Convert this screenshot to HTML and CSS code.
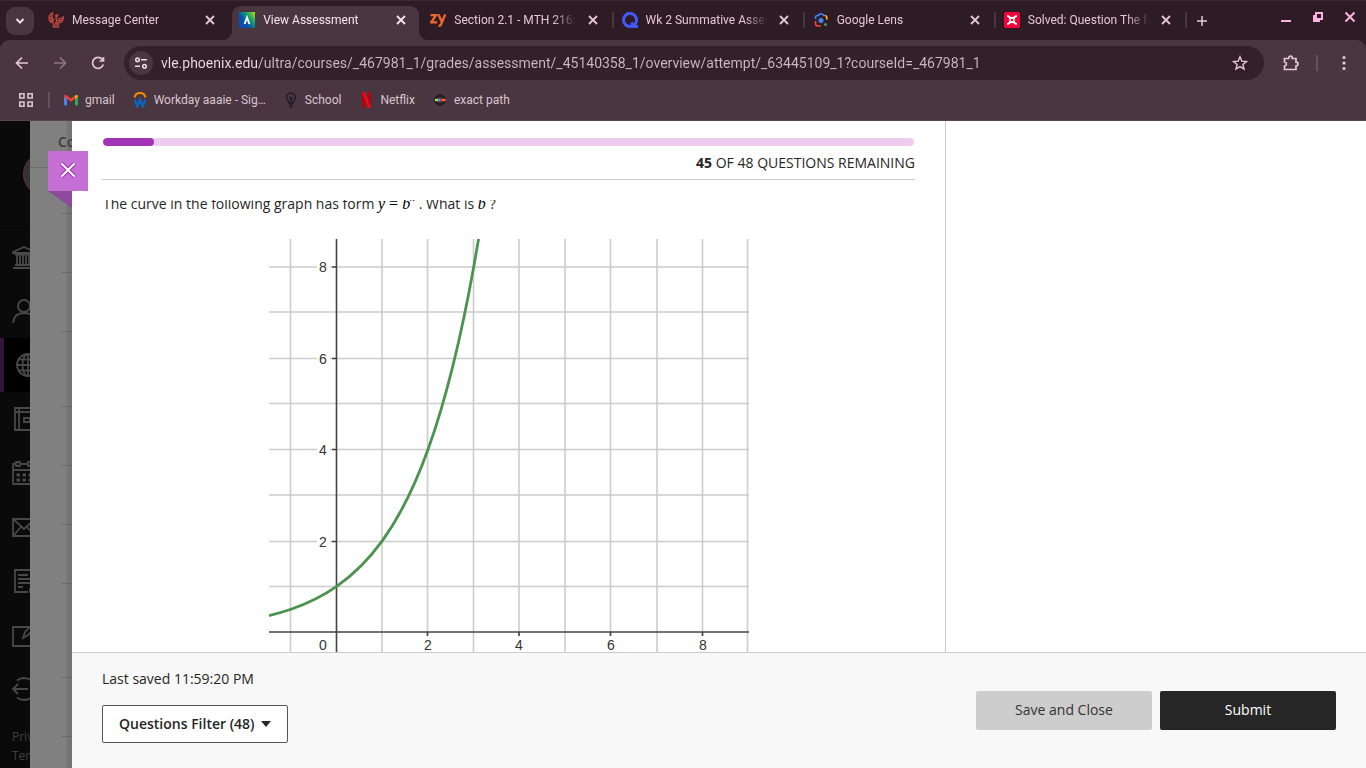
FILE: index.html
```html
<!DOCTYPE html>
<html lang="en">
<head>
<meta charset="utf-8">
<meta name="viewport" content="width=device-width, initial-scale=1">
<title>View Assessment</title>
<link rel="stylesheet" href="styles.css">
</head>
<body>
<header class="browser">
  <div class="tabstrip">
    <button class="tab-search" aria-label="Search tabs"><svg width="12" height="12" viewBox="0 0 12 12"><path d="M2.500 4l3.500 3.600L9.500 4" fill="none" stroke="currentColor" stroke-width="2"/></svg></button>
    <div class="tabs">
      <div class="tab">
        <svg class="fav" width="16" height="16" viewBox="0 0 16 16" fill="none" stroke="#b8443f" stroke-width="1.500"><path d="M5 .5C2 2 .5 5 1.500 8L5 9.500M5 1c-2 3-1.500 5 1 7M2 5l4 4M1 8c1 2 3 3 5 3M7 4l2-1-1 3 1 3-2 3M15.500 4c0 5-2 7-6 7M15 6l-5 1M15 8l-6 1M8 10v5M6 12l-1 3M9 11l2 3M10 3l-2 3M5 15h6"/></svg>
        <span class="tab-title">Message Center</span>
        <button class="tab-close" aria-label="Close tab"><svg width="10" height="10" viewBox="0 0 10 10"><path d="M1 1l8 8M9 1L1 9"/></svg></button>
      </div>
      <div class="tab tab-active">
        <svg class="fav" width="16" height="16" viewBox="0 0 16 16"><defs><linearGradient id="ally" x1="0" y1=".8" x2="1" y2="0"><stop offset=".3" stop-color="#0a4fae"/><stop offset=".6" stop-color="#0b9a78"/><stop offset="1" stop-color="#b8e000"/></linearGradient></defs><path fill="url(#ally)" d="M0 0h16v16H0z"/><path d="M5.600 12L8 5.500 10.400 12" fill="none" stroke="#fff" stroke-width="1.900"/></svg>
        <span class="tab-title">View Assessment</span>
        <button class="tab-close" aria-label="Close tab"><svg width="10" height="10" viewBox="0 0 10 10"><path d="M1 1l8 8M9 1L1 9"/></svg></button>
      </div>
      <div class="tab tab-sep">
        <svg class="fav" width="16" height="16" viewBox="0 0 16 16" fill="none" stroke="#f0682a" stroke-width="2.300"><path d="M.5 3.200h5.500L1.200 10.300h6M8.500 2.500l3.300 7.500M15.200 2.500l-4 9.500c-.5 1.400-1.400 2-2.700 1.700"/></svg>
        <span class="tab-title">Section 2.1 - MTH 216:</span>
        <button class="tab-close" aria-label="Close tab"><svg width="10" height="10" viewBox="0 0 10 10"><path d="M1 1l8 8M9 1L1 9"/></svg></button>
      </div>
      <div class="tab tab-sep">
        <svg class="fav" width="16" height="16" viewBox="0 0 16 16" fill="none" stroke="#4257ff" stroke-width="3"><circle cx="8" cy="8" r="6.500"/><path d="M9.500 10.500l2 4H16"/></svg>
        <span class="tab-title">Wk 2 Summative Asses</span>
        <button class="tab-close" aria-label="Close tab"><svg width="10" height="10" viewBox="0 0 10 10"><path d="M1 1l8 8M9 1L1 9"/></svg></button>
      </div>
      <div class="tab tab-sep">
        <svg class="fav" width="16" height="16" viewBox="0 0 16 16" fill="none" stroke-width="1.700"><path d="M4 3.500h1.500l1-1.500h3l1 1.500H12" stroke="#4285f4"/><path d="M2.500 7V5.500q0-2 2-2" stroke="#4285f4"/><path d="M12 3.500q1.800.2 1.800 2v2" stroke="#fbbc04"/><path d="M2.500 9v2.500q0 2.500 2.500 2.500h3" stroke="#ea4335"/><circle cx="8" cy="8.500" r="2.500" fill="#4285f4"/><circle cx="12.500" cy="12.500" r="1.500" fill="#34a853"/></svg>
        <span class="tab-title">Google Lens</span>
        <button class="tab-close" aria-label="Close tab"><svg width="10" height="10" viewBox="0 0 10 10"><path d="M1 1l8 8M9 1L1 9"/></svg></button>
      </div>
      <div class="tab tab-sep">
        <svg class="fav" width="16" height="16" viewBox="0 0 16 16"><rect width="16" height="16" rx="2.500" fill="#fb0038"/><path d="M3 4.200h1.500Q5.500 6 8 6t3.500-1.800H13M3 11.800h1.500Q5.500 10 8 10t3.500 1.800H13" fill="none" stroke="#fff" stroke-width="1.800"/><path d="M5.500 5.500q1.500 2.500 0 5M10.500 5.500q-1.500 2.500 0 5" fill="none" stroke="#fff" stroke-width="1.500"/></svg>
        <span class="tab-title">Solved: Question The fo</span>
        <button class="tab-close" aria-label="Close tab"><svg width="10" height="10" viewBox="0 0 10 10"><path d="M1 1l8 8M9 1L1 9"/></svg></button>
      </div>
    </div>
    <button class="new-tab" aria-label="New tab"><svg width="12" height="12" viewBox="0 0 12 12"><path d="M6 1v10M1 6h10" stroke="currentColor" stroke-width="1.500"/></svg></button>
    <div class="window-controls">
      <button aria-label="Minimize"><svg width="12" height="12" viewBox="0 0 12 12"><path d="M1 10h10" stroke="currentColor" stroke-width="2"/></svg></button>
      <button aria-label="Restore"><svg width="12" height="12" viewBox="0 0 12 12" fill="none" stroke="currentColor" stroke-width="2"><path d="M4 2h6v6H4zM2 4v6h6"/></svg></button>
      <button aria-label="Close window"><svg width="12" height="12" viewBox="0 0 12 12"><path d="M1.500 1.500l9 9M10.500 1.500l-9 9" stroke="currentColor" stroke-width="2"/></svg></button>
    </div>
  </div>
  <div class="toolbar">
    <button class="nav-btn" aria-label="Back"><svg width="14" height="14" viewBox="0 0 14 14"><path d="M13 7H2M7 1.500L1.500 7 7 12.500"/></svg></button>
    <button class="nav-btn nav-off" aria-label="Forward"><svg width="14" height="14" viewBox="0 0 14 14"><path d="M1 7h11M7 1.500L12.500 7 7 12.500"/></svg></button>
    <button class="nav-btn" aria-label="Reload"><svg width="14" height="14" viewBox="0 0 14 14"><path d="M12.300 8.500A5.500 5.500 0 1 1 11.300 3.400l1 1.200M12.500 1v4H8.500"/></svg></button>
    <div class="address">
      <button class="site-info" aria-label="Site information"><svg width="14" height="14" viewBox="0 0 14 14" fill="none" stroke="currentColor" stroke-width="1.500"><circle cx="3.500" cy="3.700" r="1.800"/><path d="M7 3.700h6M1 10.300h5"/><circle cx="10.500" cy="10.300" r="1.800"/></svg></button>
      <input class="url" type="text" aria-label="Address" value="vle.phoenix.edu/ultra/courses/_467981_1/grades/assessment/_45140358_1/overview/attempt/_63445109_1?courseId=_467981_1">
      <button class="star" aria-label="Bookmark this tab"><svg width="16" height="16" viewBox="0 0 16 16"><path d="M8 1.800l1.800 4.300 4.700.4-3.600 3 1.100 4.600L8 11.600l-4 2.500 1.100-4.600-3.600-3 4.700-.4z" fill="none" stroke="currentColor" stroke-width="1.400"/></svg></button>
    </div>
    <button class="nav-btn" aria-label="Extensions"><svg width="18" height="18" viewBox="0 0 18 18"><path d="M2.500 4.500h4.200q0-2.500 1.800-2.500t1.800 2.500h3.700v3.700q2 .2 2 1.800t-2 1.800v3.700H2.500v-3.500q2-.4 2-2t-2-2z"/></svg></button>
    <span class="divider"></span>
    <button class="nav-btn" aria-label="Menu"><svg class="dots" width="16" height="16" viewBox="0 0 16 16"><circle cx="8" cy="2.500" r="1.600"/><circle cx="8" cy="8" r="1.600"/><circle cx="8" cy="13.500" r="1.600"/></svg></button>
  </div>
  <nav class="bookmarks" aria-label="Bookmarks">
    <button class="apps" aria-label="Apps"><svg width="14" height="14" viewBox="0 0 14 14" fill="none" stroke="currentColor" stroke-width="1.600"><path d="M.8.8h4.200v4.200H.8zM9 .8h4.200v4.200H9zM.8 9h4.200v4.200H.8zM9 9h4.200v4.200H9z"/></svg></button>
    <span class="divider"></span>
    <a class="bookmark" href="#"><svg width="16" height="16" viewBox="0 0 16 16"><path d="M1 4.500L4 6.700V13.500H2q-1 0-1-1z" fill="#4285f4"/><path d="M15 4.500l-3 2.200v6.800h2q1 0 1-1z" fill="#34a853"/><path d="M1 4.500Q1 2.200 3.200 3L8 6.600 12.800 3 12 6.700l-4 3-4-3z" fill="#ea4335"/><path d="M12 3.600Q15 1.800 15 4.500L12 6.900z" fill="#fbbc04"/></svg>gmail</a>
    <a class="bookmark" href="#"><svg width="16" height="16" viewBox="0 0 16 16" fill="none"><path d="M2.500 5.500a5.600 5.600 0 0 1 11 0" stroke="#f38b00" stroke-width="2"/><path d="M2.500 7.500l2.700 7L8 8l2.800 6.500 2.700-7" stroke="#0a66c2" stroke-width="2.300"/></svg>Workday aaaie - Sig…</a>
    <a class="bookmark" href="#"><svg width="16" height="16" viewBox="0 0 16 16" fill="none" stroke="#241c20" stroke-width="1.500"><path d="M6 11.500Q6 9.500 4.500 8 3 6 4 3.500 5.300 1 8 1t4 2.500q1 2.500-.5 4.500-1.500 1.500-1.500 3.500zM6 13.500h4M7 15.300h2M8 11V7M6.500 5L8 7.500 9.500 5"/></svg>School</a>
    <a class="bookmark" href="#"><svg width="16" height="16" viewBox="0 0 16 16"><path d="M4 0h3v16H4zM10 0h3v16h-3z" fill="#b1060f"/><path d="M4 0h3l6 16h-3z" fill="#f20a18"/></svg>Netflix</a>
    <a class="bookmark" href="#"><svg width="16" height="16" viewBox="0 0 16 16"><circle cx="8" cy="8" r="4.500" fill="none" stroke="#211b1e" stroke-width="2.500"/><path d="M3 6.800h3v2.400H3z" fill="#c5e63a"/><path d="M5.500 6.800H8v2.400H5.500z" fill="#17bfc4"/><path d="M8 6.800h3v2.400H8z" fill="#f21b7f"/><path d="M10.500 6.800h3v2.400h-3z" fill="#ff7a20"/></svg>exact path</a>
  </nav>
</header>

<div class="app">
  <aside class="rail">
    <div class="rail-user"><span class="avatar"></span></div>
    <nav class="rail-nav" aria-label="Main">
      <a href="#" aria-label="Institution"><svg width="24" height="24" viewBox="0 0 24 24"><path d="M1 7l11-5 11 5v1H1zM3 9.500h18M5 10v9M8 10v9M11 10v9M14 10v9M17 10v9M3 20h18M1 23h22"/></svg></a>
      <a href="#" aria-label="Profile"><svg width="24" height="24" viewBox="0 0 24 24"><circle cx="12" cy="7" r="6"/><path d="M1 24q1-10 11-10t11 10"/></svg></a>
      <a class="rail-current" href="#" aria-label="Activity"><svg width="24" height="24" viewBox="0 0 24 24"><circle cx="12" cy="12" r="11"/><ellipse cx="12" cy="12" rx="5.500" ry="11"/><path d="M12 1v22M1 12h22M3 6.500h18M3 17.500h18"/></svg></a>
      <a href="#" aria-label="Courses"><svg class="inset" width="24" height="24" viewBox="0 0 24 24"><path d="M1 1h22v22H1zM5 1v22M1 5h22M10 11h6v4h-6z"/></svg></a>
      <a href="#" aria-label="Calendar"><svg width="24" height="24" viewBox="0 0 24 24"><path d="M4 3H1v20h22V3h-3M9 3h6M1 9h22M4 1h4v4H4zM16 1h4v4h-4z"/><path d="M4.500 14h15M4.500 19h15" stroke-width="3" stroke-dasharray="3.500 2.500"/></svg></a>
      <a href="#" aria-label="Messages"><svg width="24" height="24" viewBox="0 0 24 24"><path d="M1 4h22v17H1zM1 4l11 10L23 4M1 21l8-9M23 21l-8-9"/></svg></a>
      <a href="#" aria-label="Grades"><svg class="inset" width="24" height="24" viewBox="0 0 24 24"><path d="M14 23H1V1h20v16M4 6h10M4 10h12M4 14h12M4 18h5M16 24v-4l5-3"/></svg></a>
      <a href="#" aria-label="Tools"><svg width="24" height="24" viewBox="0 0 24 24"><path d="M18 4H1v19h22V11M11 15l2-6 8-8 3 3-8 8z"/></svg></a>
      <a href="#" aria-label="Sign out"><svg width="24" height="24" viewBox="0 0 24 24"><path d="M1 12h15M6 7l-5 5 5 5M5 3.500Q8 1 12 1q11 1 11 11T12 23q-4 0-7-2.500"/></svg></a>
    </nav>
    <div class="rail-legal"><a href="#">Priv</a><a href="#">Terms</a></div>
  </aside>

  <div class="behind">
    <div class="behind-title">Course</div>
    <ul class="behind-rows"><li></li><li></li><li></li><li class="tall"></li><li></li><li></li><li></li><li class="taller"></li><li></li></ul>
  </div>

  <main class="panel">
    <button class="panel-close" aria-label="Close"><svg width="18" height="18" viewBox="0 0 18 18"><path d="M2.500 2.500l13 13M15.500 2.500l-13 13" stroke="#9a2fb4" stroke-width="4"/><path d="M2.500 2.500l13 13M15.500 2.500l-13 13" stroke="#fff" stroke-width="2"/></svg></button>
    <div class="panel-body">
      <section class="question-col">
        <div class="status">
          <div class="progress" role="progressbar" aria-label="Questions answered" aria-valuemin="0" aria-valuemax="48" aria-valuenow="3"><div class="progress-fill" style="width:6.25%"></div></div>
          <p class="remaining"><b>45</b> OF 48 QUESTIONS REMAINING</p>
        </div>
        <div class="question">
          <p class="prompt">The curve in the following graph has form <span class="math"><i>y</i><span class="eq">=</span><i>b</i><sup><i>x</i></sup></span> . What is <i class="math">b</i><span class="math"> </span>?</p>
          <svg class="graph" width="480" height="413" viewBox="0 0 480 413" role="img" aria-label="Graph of an exponential curve">
            <path class="grid" d="M21.500 0v413M113 0v413M158.500 0v413M204.500 0v413M250 0v413M296 0v413M341.500 0v413M388 0v413M433.500 0v413M478.500 0v413M0 28h480M0 73h480M0 119.500h480M0 164.500h480M0 210.500h480M0 256h480M0 302.500h480M0 347.500h480"/>
            <path class="mask" d="M48 18h13v20H48zM48 110h13v20H48zM48 201h13v20H48zM48 293h13v20H48zM152 397h14v16h-14zM243 397h14v16h-14zM335 397h14v16h-14zM427 397h14v16h-14z"/>
            <path class="axis" d="M67.500 0v413M0 393h480M63 28h5M63 119.500h5M63 210.500h5M63 302.500h5M158.500 393v4M250 393v4M341.500 393v4M433.500 393v4"/>
            <path class="curve" d="M0 376.600C7.400 374.800 14.700 372.700 22 370.200 37.200 364.900 52.500 357.900 67.700 347.300 82.900 336.700 98.200 322.700 113.400 301.600 128.600 280.500 143.900 252.400 159.100 210.200 174.300 168 189.600 111.900 204.800 27.400L210.300-4.300"/>
            <g class="labels"><text x="54" y="33">8</text><text x="54" y="125">6</text><text x="54" y="216">4</text><text x="54" y="308">2</text><text x="54" y="411">0</text><text x="159" y="411">2</text><text x="250" y="411">4</text><text x="342" y="411">6</text><text x="434" y="411">8</text></g>
          </svg>
        </div>
      </section>
      <aside class="side-col"></aside>
    </div>
    <footer class="panel-footer">
      <div class="footer-left">
        <p class="saved">Last saved 11:59:20 PM</p>
        <button class="filter" aria-haspopup="true">Questions Filter (48)<svg width="10" height="6" viewBox="0 0 10 6"><path d="M0 0h10L5 6z" fill="#262626"/></svg></button>
      </div>
      <div class="footer-actions">
        <button class="btn btn-light">Save and Close</button>
        <button class="btn btn-dark">Submit</button>
      </div>
    </footer>
  </main>
</div>
</body>
</html>
```
FILE: styles.css
```css
* { box-sizing: border-box; }

body {
  margin: 0;
  height: 100vh;
  display: flex;
  flex-direction: column;
  overflow: hidden;
  font: 14px/20px "Open Sans", "Noto Sans", sans-serif;
  color: #262626;
}

button, input { font: inherit; color: inherit; }
button { border: 0; padding: 0; background: none; display: flex; align-items: center; justify-content: center; flex: none; }
p, ul { margin: 0; padding: 0; list-style: none; }
a { color: inherit; text-decoration: none; }
svg { flex: none; }

/* Browser frame */
.browser { flex: none; background: #2d1b26; color: #e5c7d7; font: 12px/16px Roboto, sans-serif; border-top: 1px solid #3a2933; }
.tabstrip { height: 39px; display: flex; align-items: center; padding-left: 6px; }
.tab-search { width: 28px; height: 28px; border-radius: 9px; background: #4a3641; color: #f3dfe9; margin-right: 7px; }
.tabs { flex: 0 1 1147px; min-width: 0; display: flex; align-self: stretch; }
.tab { flex: 1 1 0; min-width: 0; display: flex; align-items: center; gap: 8px; padding: 0 14px 2px 7px; position: relative; }
.tab-title { flex: 1; min-width: 0; white-space: nowrap; overflow: hidden; mask-image: linear-gradient(to right, #000 calc(100% - 24px), transparent); }
.tab-close { width: 16px; height: 16px; }
.tab-close path { stroke: currentColor; stroke-width: 1.800; }
.tab-active { align-self: stretch; color: #f6e3ed; }
.tab-active::before { content: ""; position: absolute; inset: 5px 4px 0 0; background: #4a3641; border-radius: 9px 9px 0 0; }
.tab-active::after { content: ""; position: absolute; left: -9px; right: -5px; bottom: 0; height: 9px; background: radial-gradient(circle at 0 0, transparent 9px, #4a3641 9px) left / 9px 9px no-repeat, radial-gradient(circle at 100% 0, transparent 9px, #4a3641 9px) right / 9px 9px no-repeat; }
.tab-active > * { position: relative; z-index: 1; }
.tab-sep::after { content: ""; position: absolute; right: 1px; top: 11px; width: 2px; height: 16px; background: #4a3641; }
.new-tab { width: 28px; height: 28px; }
.window-controls { margin-left: auto; display: flex; gap: 20px; padding: 0 10px 8px 0; color: #ffb3e0; }

.toolbar { height: 46px; display: flex; align-items: center; background: #4a3641; border-radius: 9px 9px 0 0; padding: 0 8px; }
.nav-btn { width: 28px; height: 28px; }
.nav-btn path { fill: none; stroke: currentColor; stroke-width: 1.700; }
.nav-btn + .nav-btn { margin-left: 10px; }
.nav-off { color: #8f7583; }
.dots { fill: currentColor; }
.address { flex: 1; min-width: 0; height: 34px; margin: 0 13px 0 12px; display: flex; align-items: center; gap: 8px; background: #33202b; border-radius: 17px; padding: 0 16px 0 5px; }
.site-info { width: 24px; height: 24px; border-radius: 12px; background: #4a3641; color: #f0dbe6; }
.url { flex: 1; min-width: 0; border: 0; padding: 0; outline: 0; font-size: 14px; line-height: 20px; color: transparent; background: linear-gradient(to right, #f0dce7 98px, #cdb9c4 98px); background-clip: text; -webkit-background-clip: text; }
.divider { width: 2px; height: 16px; background: #66505c; flex: none; }
.toolbar .divider { margin: 0 12px 0 11px; }

.bookmarks { height: 35px; display: flex; align-items: center; padding: 0 19px 7px; background: #4a3641; border-bottom: 1px solid #59464f; color: #d8c5cf; gap: 17px; }
.bookmarks .divider { margin: 0 -4px 0 -2px; }
.bookmark { display: flex; align-items: center; gap: 6px; white-space: nowrap; }

/* Dimmed page behind the panel */
.app { flex: 1; min-height: 0; display: flex; }
.rail { flex: 0 0 30px; background: #0a0a0a; overflow: hidden; color: #404040; }
.rail-user { height: 107px; padding: 31px 0 0 23px; border-bottom: 1px solid #050505; }
.avatar { display: block; width: 44px; height: 44px; border-radius: 22px; border: 1px solid #6a2d29; background: #333; }
.rail-nav { padding-top: 2px; }
.rail-nav a { display: flex; align-items: center; height: 54px; padding-left: 12px; }
.rail-nav svg { fill: none; stroke: #484848; stroke-width: 1.800; }
.rail-nav .inset { margin-left: 2px; }
.rail-nav .rail-current { background: #000; border-left: 4px solid #321539; }
.rail-legal { display: flex; flex-direction: column; padding: 11px 0 0 12px; font-size: 12px; line-height: 19px; }

.behind { flex: 0 0 42px; background: #808080; overflow: hidden; box-shadow: inset -5px 0 #747474; }
.behind-title { height: 47px; padding: 11px 0 0 28px; white-space: nowrap; font-weight: 600; color: #3c3c3c; border-bottom: 1px solid #6e6e6e; overflow: hidden; }
.behind-rows { padding-left: 32px; }
.behind-rows li { height: 59px; border-bottom: 1px solid #686868; }
.behind-rows li:first-child { height: 46px; }
.behind-rows .tall { height: 75px; }
.behind-rows .taller { height: 94px; }

/* Assessment panel */
.panel { flex: 1; min-width: 0; position: relative; display: flex; flex-direction: column; background: #fff; }
.panel-close { position: absolute; left: -24px; top: 30px; width: 40px; height: 40px; padding-bottom: 2px; background: #c56fd5; }
.panel-close::after { content: ""; position: absolute; left: 0; top: 100%; width: 24px; height: 17px; background: #8e4a9b; clip-path: polygon(0 0, 100% 0, 100% 100%); }
.panel-body { flex: 1; min-height: 0; display: grid; grid-template-columns: minmax(0, 874fr) minmax(0, 420fr); }
.question-col { min-height: 0; display: flex; flex-direction: column; padding: 0 30px; border-right: 1px solid #ccc; }
.status { padding-top: 17px; border-bottom: 1px solid #ccc; }
.progress { height: 8px; margin: 0 1px; border-radius: 4px; background: #eccdf0; overflow: hidden; }
.progress-fill { height: 8px; border-radius: 4px; background: #a234b5; }
.remaining { text-align: right; padding: 7px 0 6px; }
.question { flex: 1; min-height: 0; margin-top: 20px; overflow: hidden; }
.prompt { margin-top: -6px; padding-left: 1px; height: 45px; }
.math { font-family: "Liberation Serif", serif; font-size: 16px; line-height: 16px; color: #000; }
.math sup { font-size: 11px; line-height: 0; vertical-align: 8px; }
.eq { padding: 0 4px; }
.graph { display: block; margin: 0 auto; }
.grid { stroke: #ccc; stroke-width: 1.600; fill: none; }
.mask { fill: #fff; }
.axis { stroke: #444; stroke-width: 1.600; fill: none; }
.curve { stroke: #4b934f; stroke-width: 2.800; fill: none; }
.labels { font: 14px "Liberation Sans", Arial, sans-serif; fill: #333; text-anchor: middle; }

.panel-footer { flex: none; display: flex; justify-content: space-between; align-items: flex-start; background: #f8f8f8; border-top: 1px solid #ccc; padding: 16px 30px 25px; }
.filter { height: 38px; margin-top: 16px; padding: 0 16px; gap: 6px; font-weight: 600; background: #fff; border: 1px solid #555; border-radius: 2px; white-space: nowrap; }
.footer-actions { display: flex; gap: 8px; padding-top: 22px; }
.btn { width: 176px; height: 39px; padding-bottom: 2px; border-radius: 2px; }
.btn-light { background: #cdcdcd; color: #333; }
.btn-dark { background: #262626; color: #fff; }
```
